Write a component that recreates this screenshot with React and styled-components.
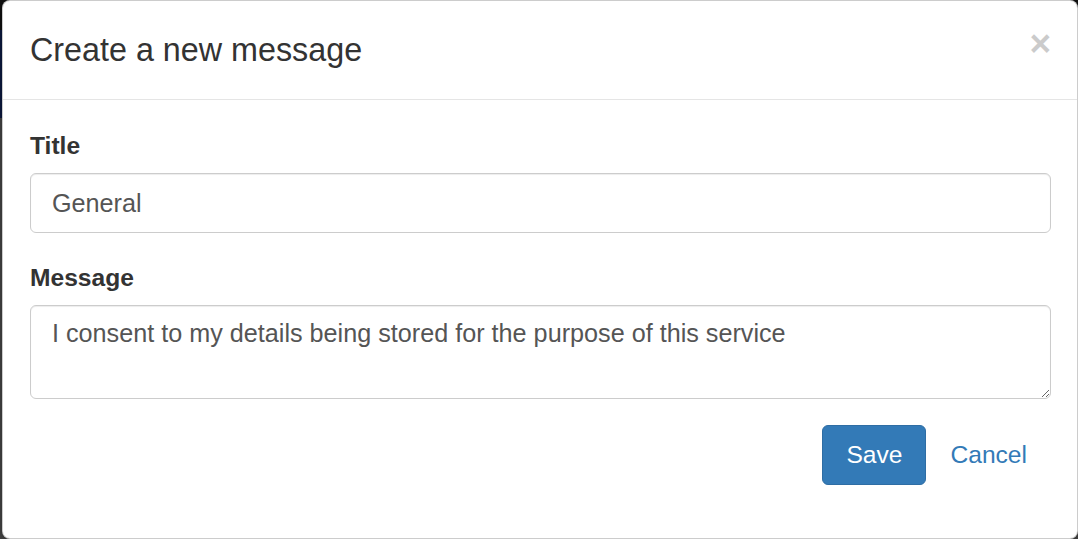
import React from 'react';
import styled, { createGlobalStyle } from 'styled-components';

const GlobalStyle = createGlobalStyle`
  html, body {
    margin: 0;
    padding: 0;
    height: 100%;
    overflow: hidden;
  }
  body {
    font-family: "Liberation Sans", Arial, sans-serif;
    color: #333;
  }
  * { box-sizing: border-box; }
`;

const Backdrop = styled.div`
  height: 100vh;
  padding-left: 2px;
  background: linear-gradient(to bottom, #111 0, #111 30px, #0d1b45 30px, #0d1b45 118px, #4b4b4b 118px);
  display: flex;
`;

const Modal = styled.div`
  flex: 1;
  height: 100%;
  background: #fff;
  border: 1px solid rgba(0, 0, 0, 0.2);
  border-radius: 8px;
  box-shadow: 0 5px 15px rgba(0, 0, 0, 0.5);
  display: flex;
  flex-direction: column;
`;

const Header = styled.div`
  padding: 26px 26px 26px 27px;
  border-bottom: 1px solid #e5e5e5;
  display: flex;
  align-items: center;
  justify-content: space-between;
`;

const Heading = styled.h4`
  margin: 0;
  font-size: 32.3px;
  font-weight: 400;
  line-height: 46px;
`;

const Close = styled.button`
  background: none;
  border: 0;
  padding: 0;
  margin-top: -14px;
  font-family: inherit;
  font-size: 37px;
  font-weight: 700;
  line-height: 1;
  color: #000;
  opacity: 0.2;
  text-shadow: 0 1px 0 #fff;
  cursor: pointer;
`;

const Body = styled.form`
  padding: 27px 26px 26px 27px;
`;

const Group = styled.div`
  margin-bottom: 26px;
`;

const Label = styled.label`
  display: block;
  font-size: 24.6px;
  font-weight: 700;
  line-height: 34px;
  padding-top: 2px;
  margin-bottom: 10px;
`;

const fieldCss = `
  display: block;
  width: 100%;
  padding: 10px 21px;
  font-family: inherit;
  font-size: 25.2px;
  line-height: 34px;
  color: #555;
  background: #fff;
  border: 1px solid #ccc;
  border-radius: 6px;
  box-shadow: inset 0 1px 1px rgba(0, 0, 0, 0.075);
  outline: none;
`;

const Input = styled.input`
  ${fieldCss}
  height: 60px;
`;

const TextArea = styled.textarea`
  ${fieldCss}
  height: 94px;
  resize: vertical;
`;

const Actions = styled.div`
  display: flex;
  justify-content: flex-end;
  gap: 0;
`;

const Button = styled.button`
  height: 60px;
  padding: 0 23px;
  font-family: inherit;
  font-size: 24.6px;
  line-height: 34px;
  border-radius: 6px;
  cursor: pointer;
  border: 1px solid ${p => (p.$primary ? '#2e6da4' : 'transparent')};
  background: ${p => (p.$primary ? '#337ab7' : 'transparent')};
  color: ${p => (p.$primary ? '#fff' : '#337ab7')};
`;

export default function App() {
  return (
    <>
      <GlobalStyle />
      <Backdrop>
        <Modal>
          <Header>
            <Heading>Create a new message</Heading>
            <Close type="button" aria-label="Close">×</Close>
          </Header>
          <Body onSubmit={e => e.preventDefault()}>
            <Group>
              <Label htmlFor="title">Title</Label>
              <Input id="title" defaultValue="General" />
            </Group>
            <Group>
              <Label htmlFor="message">Message</Label>
              <TextArea
                id="message"
                defaultValue="I consent to my details being stored for the purpose of this service"
              />
            </Group>
            <Actions>
              <Button type="submit" $primary>Save</Button>
              <Button type="button">Cancel</Button>
            </Actions>
          </Body>
        </Modal>
      </Backdrop>
    </>
  );
}
